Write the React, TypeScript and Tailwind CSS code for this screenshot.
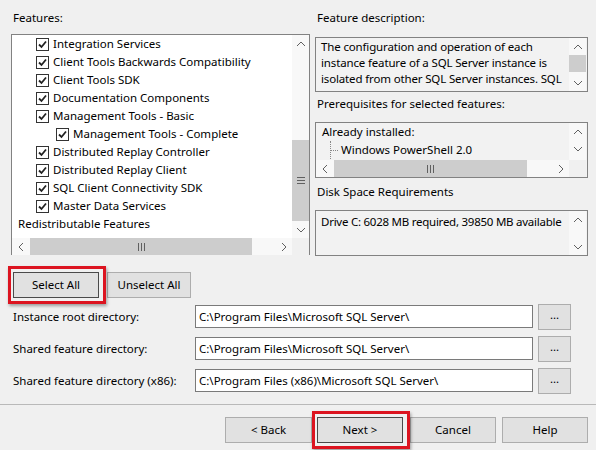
import type { ReactNode } from 'react';

type Dir = 'up' | 'down' | 'left' | 'right';

const CHEVRON: Record<Dir, string> = {
  up: '1,6 5,2 9,6',
  down: '1,2 5,6 9,2',
  left: '6,1 2,5 6,9',
  right: '2,1 6,5 2,9',
};

function Arrow({ dir }: { dir: Dir }) {
  const vertical = dir === 'up' || dir === 'down';
  return (
    <div className="flex h-[17px] w-[17px] shrink-0 items-center justify-center">
      <svg width={vertical ? 10 : 8} height={vertical ? 8 : 10} viewBox={vertical ? '0 0 10 8' : '0 0 8 10'}>
        <polyline points={CHEVRON[dir]} fill="none" stroke="#606060" strokeWidth="1" />
      </svg>
    </div>
  );
}

// vertical grip "≡"
function VGrip() {
  return (
    <svg width="8" height="7" viewBox="0 0 8 7">
      <path d="M0 0.5H8M0 3.5H8M0 6.5H8" stroke="#606060" strokeWidth="1" />
    </svg>
  );
}

// horizontal grip "III"
function HGrip() {
  return (
    <svg width="7" height="8" viewBox="0 0 7 8">
      <path d="M0.5 0V8M3.5 0V8M6.5 0V8" stroke="#606060" strokeWidth="1" />
    </svg>
  );
}

function Check() {
  return (
    <span className="flex h-[13px] w-[13px] shrink-0 items-center justify-center border border-[#333] bg-white">
      <svg width="9" height="9" viewBox="0 0 9 9">
        <path d="M1 4.5L3.5 7L8 1.5" fill="none" stroke="#222" strokeWidth="1.8" />
      </svg>
    </span>
  );
}

const FEATURES: { label: string; indent?: boolean }[] = [
  { label: 'Integration Services' },
  { label: 'Client Tools Backwards Compatibility' },
  { label: 'Client Tools SDK' },
  { label: 'Documentation Components' },
  { label: 'Management Tools - Basic' },
  { label: 'Management Tools - Complete', indent: true },
  { label: 'Distributed Replay Controller' },
  { label: 'Distributed Replay Client' },
  { label: 'SQL Client Connectivity SDK' },
  { label: 'Master Data Services' },
];

function Button({ children, focused, className }: { children: ReactNode; focused?: boolean; className?: string }) {
  return (
    <button
      className={`flex h-[26px] items-center justify-center border bg-[#e1e1e1] text-[11.5px] text-black ${
        focused ? 'border-[#4a4a4a]' : 'border-[#adadad]'
      } ${className ?? ''}`}
    >
      {children}
    </button>
  );
}

// red annotation frame drawn over a button
function Highlight({ children }: { children: ReactNode }) {
  return (
    <div className="relative">
      {children}
      <div className="pointer-events-none absolute -top-[6px] -bottom-[6px] -left-[5px] -right-[7px] border-[3px] border-[#dc1420] shadow-[1px_2px_3px_rgba(0,0,0,0.35)]" />
    </div>
  );
}

function PathRow({ label, value }: { label: string; value: string }) {
  return (
    <div className="flex h-[25px] items-center">
      <span className="w-[182px]">{label}</span>
      <div className="flex h-[23px] w-[338px] items-center border border-[#7a7a7a] bg-white pl-[3px]">{value}</div>
      <Button className="ml-[5px] w-[33px] pb-[4px] text-[10px]">...</Button>
    </div>
  );
}

export default function App() {
  return (
    <div
      className="relative h-[450px] w-[596px] overflow-hidden bg-[#f0f0f0] text-[11.5px] text-black"
      style={{ fontFamily: '"Noto Sans", "Open Sans", sans-serif' }}
    >
      {/* top panes */}
      <div className="flex pl-[11px] pt-[9px]">
        {/* feature tree */}
        <div className="w-[299px]">
          <div className="h-[18px] pl-[2px] leading-[18px]">Features:</div>
          <div className="mt-[7px] flex h-[221px] flex-col border border-[#828282] bg-white">
            <div className="flex h-[203px]">
              <div className="w-[280px] overflow-hidden">
                {FEATURES.map((f) => (
                  <div
                    key={f.label}
                    className={`flex h-[18px] items-center whitespace-nowrap ${f.indent ? 'pl-[44px]' : 'pl-[24px]'}`}
                  >
                    <Check />
                    <span className="ml-[4px]">{f.label}</span>
                  </div>
                ))}
                <div className="flex h-[18px] items-center pl-[6px]">Redistributable Features</div>
              </div>
              <div className="flex w-[17px] flex-col bg-[#f8f8f8]">
                <Arrow dir="up" />
                <div className="h-[88px]" />
                <div className="flex h-[81px] items-center justify-center bg-[#cdcdcd]">
                  <VGrip />
                </div>
                <div className="flex-1" />
                <Arrow dir="down" />
              </div>
            </div>
            <div className="flex h-[17px]">
              <div className="flex w-[280px] bg-[#f8f8f8]">
                <Arrow dir="left" />
                <div className="ml-[1px] flex w-[222px] items-center justify-center bg-[#cdcdcd]">
                  <HGrip />
                </div>
                <div className="flex-1" />
                <Arrow dir="right" />
              </div>
              <div className="w-[17px] bg-[#f0f0f0]" />
            </div>
          </div>
        </div>

        {/* right side panes */}
        <div className="ml-[5px] w-[273px]">
          <div className="h-[18px] pl-[2px] leading-[18px]">Feature description:</div>
          <div className="mt-[10px] flex h-[55px] border border-[#828282] bg-[#f2f2f2]">
            <div className="flex-1 overflow-hidden whitespace-nowrap pl-[5px] pt-[1px] leading-[16px] tracking-[-0.15px]">
              <div>The configuration and operation of each</div>
              <div>instance feature of a SQL Server instance is</div>
              <div>isolated from other SQL Server instances. SQL</div>
            </div>
            <div className="mr-[1px] flex w-[17px] flex-col bg-[#f8f8f8]">
              <Arrow dir="up" />
              <div className="h-[17px] bg-[#cdcdcd]" />
              <div className="flex-1" />
              <Arrow dir="down" />
            </div>
          </div>

          <div className="mt-[3px] h-[18px] pl-[2px] leading-[18px]">Prerequisites for selected features:</div>
          <div className="mt-[9px] flex h-[56px] flex-col border border-[#828282] bg-[#f2f2f2]">
            <div className="flex h-[37px]">
              <div className="flex-1 whitespace-nowrap">
                <div className="flex h-[18px] items-center pl-[6px]">Already installed:</div>
                <div className="flex h-[18px] items-center pl-[14px]">
                  <span className="h-[18px] w-[8px] self-start border-l border-dotted border-[#888]">
                    <span className="mt-[9px] block w-[7px] border-t border-dotted border-[#888]" />
                  </span>
                  <span className="ml-[3px]">Windows PowerShell 2.0</span>
                </div>
              </div>
              <div className="mr-[1px] flex w-[17px] flex-col bg-[#f8f8f8]">
                <Arrow dir="up" />
                <Arrow dir="down" />
              </div>
            </div>
            <div className="flex h-[17px]">
              <div className="flex flex-1 bg-[#f8f8f8]">
                <Arrow dir="left" />
                <div className="ml-[1px] flex w-[193px] items-center justify-center bg-[#cdcdcd]">
                  <HGrip />
                </div>
                <div className="flex-1" />
                <Arrow dir="right" />
              </div>
              <div className="mr-[1px] w-[17px] bg-[#f0f0f0]" />
            </div>
          </div>

          <div className="mt-[5px] h-[18px] pl-[2px] leading-[18px]">Disk Space Requirements</div>
          <div className="mt-[9px] flex h-[46px] border border-[#828282] bg-[#f2f2f2]">
            <div className="flex-1 overflow-hidden whitespace-nowrap pl-[5px] pt-[3px] leading-[16px] tracking-[-0.25px]">
              Drive C: 6028 MB required, 39850 MB available
            </div>
            <div className="mr-[1px] flex w-[17px] flex-col bg-[#f8f8f8]">
              <Arrow dir="up" />
              <div className="flex-1" />
              <Arrow dir="down" />
            </div>
          </div>
        </div>
      </div>

      {/* select buttons */}
      <div className="mt-[16px] flex pl-[13px]">
        <Highlight>
          <Button focused className="w-[86px]">Select All</Button>
        </Highlight>
        <Button className="ml-[8px] w-[84px]">Unselect All</Button>
      </div>

      {/* directories */}
      <div className="mt-[6px] flex flex-col gap-[7px] pl-[13px]">
        <PathRow label="Instance root directory:" value="C:\Program Files\Microsoft SQL Server\" />
        <PathRow label="Shared feature directory:" value="C:\Program Files\Microsoft SQL Server\" />
        <PathRow label="Shared feature directory (x86):" value="C:\Program Files (x86)\Microsoft SQL Server\" />
      </div>

      <div className="mt-[11px] border-t border-[#b9b9b9]" />

      {/* wizard buttons */}
      <div className="mt-[12px] flex justify-end pr-[8px]">
        <Button className="w-[87px]">&lt; Back</Button>
        <div className="ml-[5px]">
          <Highlight>
            <Button focused className="w-[86px]">Next &gt;</Button>
          </Highlight>
        </div>
        <Button className="ml-[7px] w-[86px]">Cancel</Button>
        <Button className="ml-[6px] w-[86px]">Help</Button>
      </div>
    </div>
  );
}
